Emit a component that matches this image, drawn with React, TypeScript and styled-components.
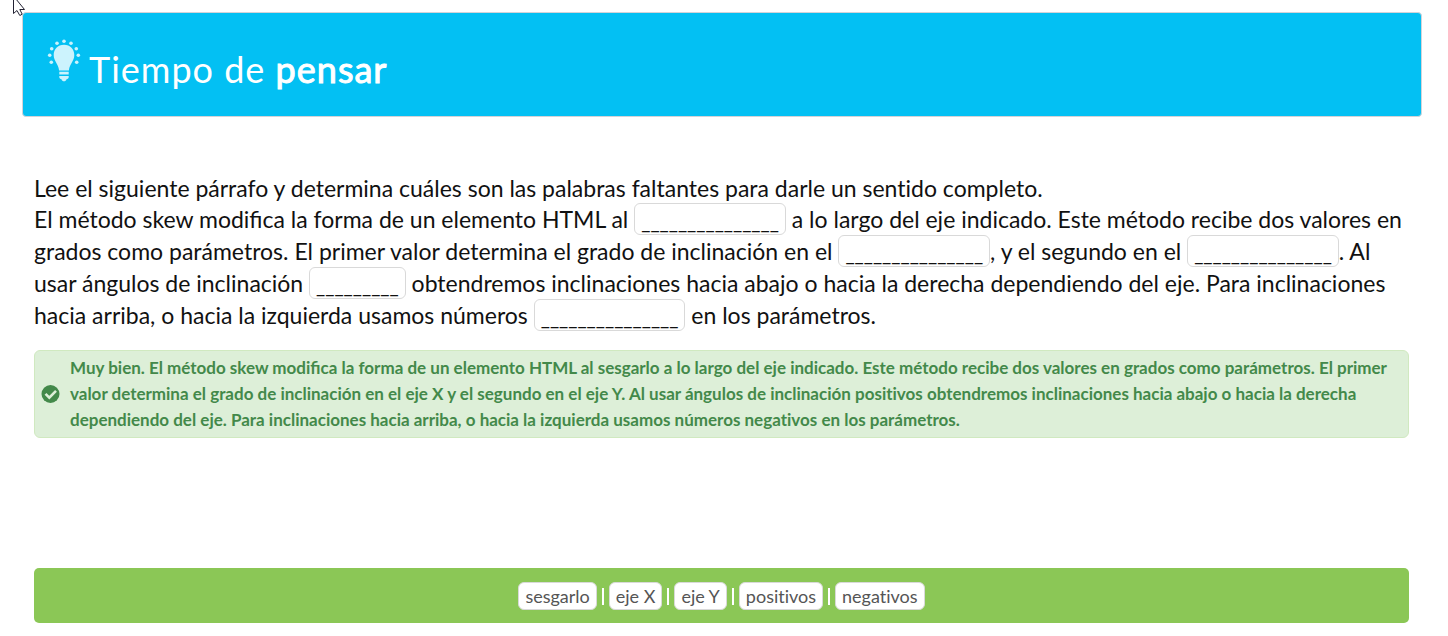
import React from "react";
import styled, { createGlobalStyle } from "styled-components";

const GlobalStyle = createGlobalStyle`
  * { box-sizing: border-box; }
  body {
    margin: 0;
    background: #fff;
    color: #111;
    font-family: Lato, "Open Sans", sans-serif;
  }
`;

const Page = styled.div`
  padding: 12px 26px 13px 22px;
`;

const Pointer = styled.svg`
  position: absolute;
  left: 13px;
  top: 0;
  width: 13px;
  height: 16px;
`;

const Banner = styled.header`
  display: flex;
  align-items: flex-start;
  min-height: 105px;
  padding: 26px 24px 24px;
  border: 1px solid #d3d3d8;
  border-radius: 4px;
  background: #03c0f3;
  color: #fff;
`;

const Bulb = styled.svg`
  flex: none;
  width: 34px;
  height: 44px;
  margin-right: 8px;
`;

const Title = styled.h1`
  margin: 8px 0 0;
  font-size: 36px;
  line-height: 44px;
  font-weight: 400;
  letter-spacing: 1px;
`;

const Heavy = styled.span`
  -webkit-text-stroke: 1px currentColor;
`;

const Main = styled.main`
  padding: 56px 13px 0 12px;
`;

const Intro = styled.p`
  margin: 0;
  font-size: 23px;
  line-height: 30px;
  font-variant-ligatures: none;
`;

const Exercise = styled.p`
  margin: 0;
  font-size: 23px;
  line-height: 32px;
`;

const Blank = styled.span`
  display: inline-block;
  height: 32px;
  padding: 0 6px;
  border: 1px solid #d9d9d9;
  border-radius: 6px;
  background: #fff;
  font-size: 20px;
  line-height: 34px;
  vertical-align: top;
`;

const Feedback = styled.section`
  display: flex;
  align-items: center;
  gap: 9px;
  margin-top: 19px;
  padding: 4px 6px;
  border: 1px solid #d0e9c0;
  border-radius: 6px;
  background: #ddefd8;
  color: #43894a;
`;

const Check = styled.svg`
  flex: none;
  width: 20px;
  height: 20px;
`;

const FeedbackText = styled.p`
  margin: 0;
  font-size: 17px;
  font-weight: 700;
  line-height: 26px;
`;

const Answer = styled.span`
  font-variant-ligatures: none;
`;

const WordBank = styled.div`
  display: flex;
  flex-wrap: wrap;
  justify-content: center;
  align-items: center;
  gap: 5px;
  margin-top: 130px;
  padding: 14px 13px 13px;
  border-radius: 5px;
  background: #8bc756;
`;

const Divider = styled.span`
  width: 2px;
  height: 17px;
  background: #fff;
`;

const Word = styled.button`
  height: 28px;
  padding: 0 6px;
  border: 1px solid #d9d9d9;
  border-radius: 6px;
  background: #fff;
  color: #555;
  font-family: inherit;
  font-size: 18px;
  font-variant-ligatures: none;
  line-height: 24px;
`;

const WORDS = ["sesgarlo", "eje X", "eje Y", "positivos", "negativos"];
const LONG = "_".repeat(15);
const SHORT = "_".repeat(9);

const RAYS = [
  [4.3, 23.3], [2.7, 16.3], [4.7, 9.7], [10, 4.3], [17, 2.3], [24, 4.3], [29.3, 9.7], [31.3, 16.3], [29.7, 23.3],
];

export default function App() {
  return (
    <Page>
      <GlobalStyle />
      <Banner>
        <Bulb viewBox="0 0 34 44" aria-hidden="true">
          <g fill="#fff" fillOpacity="0.8">
            {RAYS.map(([x, y]) => (
              <circle key={`${x}-${y}`} cx={x} cy={y} r="1.8" />
            ))}
            <path d="M17 5.800C10.700 5.800 6.700 10.300 6.700 16c0 6.200 4.600 8.500 5.400 15.500h9.800c.8-7 5.400-9.300 5.400-15.500C27.300 10.300 23.300 5.800 17 5.800z" />
            <path d="M12.300 32.800h9.400v2.600h-9.400zM12.300 37h9.400v1.200c0 1-1 1.700-2.200 2-.4 1.300-1.200 2.100-2.500 2.100s-2.100-.8-2.500-2.100c-1.200-.3-2.200-1-2.200-2z" />
          </g>
        </Bulb>
        <Title>
          Tiempo de <Heavy>pensar</Heavy>
        </Title>
      </Banner>
      <Main>
        <Intro>
          Lee el siguiente párrafo y determina cuáles son las palabras faltantes para darle un sentido completo.
        </Intro>
        <Exercise>
          El método skew modifica la forma de un elemento HTML al <Blank>{LONG}</Blank> a lo largo del eje
          indicado. Este método recibe dos valores en grados como parámetros. El primer valor determina el
          grado de inclinación en el <Blank>{LONG}</Blank>, y el segundo en el <Blank>{LONG}</Blank>. Al usar
          ángulos de inclinación <Blank>{SHORT}</Blank> obtendremos inclinaciones hacia abajo o hacia la
          derecha dependiendo del eje. Para inclinaciones hacia arriba, o hacia la izquierda usamos
          números <Blank>{LONG}</Blank> en los parámetros.
        </Exercise>
        <Feedback role="status">
          <Check viewBox="0 0 20 20" aria-hidden="true">
            <circle cx="9.500" cy="10" r="9" fill="#43894a" />
            <path d="M4.500 9.800l3.800 3.900 6.700-6.900" fill="none" stroke="#ddefd8" strokeWidth="2.600" />
          </Check>
          <FeedbackText>
            Muy bien. El método skew modifica la forma de un elemento HTML al sesgarlo a lo largo del eje
            indicado. Este método recibe dos valores en grados como parámetros. El primer valor determina el
            grado de inclinación en el eje X y el segundo en el eje Y. Al usar ángulos de inclinación{" "}
            <Answer>positivos</Answer> obtendremos inclinaciones hacia abajo o hacia la derecha dependiendo
            del eje. Para inclinaciones hacia arriba, o hacia la izquierda usamos números{" "}
            <Answer>negativos</Answer> en los parámetros.
          </FeedbackText>
        </Feedback>
        <WordBank>
          {WORDS.map((word, i) => (
            <React.Fragment key={word}>
              {i > 0 && <Divider />}
              <Word type="button">{word}</Word>
            </React.Fragment>
          ))}
        </WordBank>
      </Main>
      <Pointer viewBox="0 0 13 16" aria-hidden="true">
        <path d="M.5-4V13.500L4 10.500l2.800 5 2.400-1.300L6.800 9.500h4.700z" fill="#fff" stroke="#223" />
      </Pointer>
    </Page>
  );
}
